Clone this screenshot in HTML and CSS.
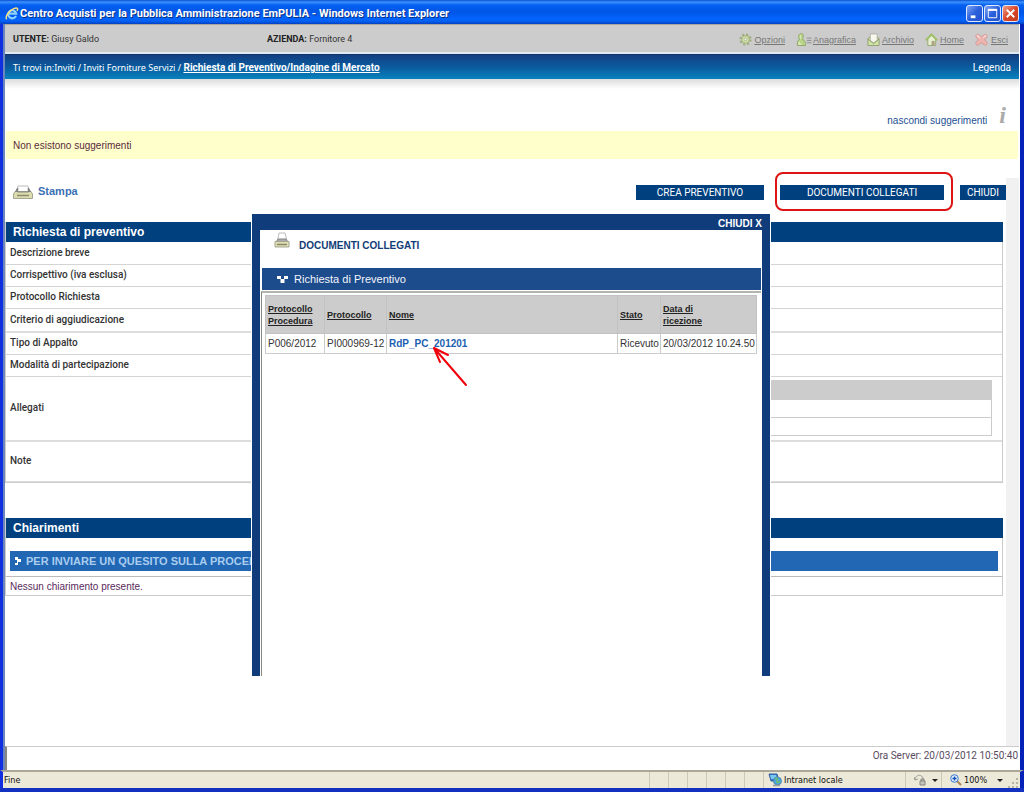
FILE: index.html
```html
<!DOCTYPE html>
<html lang="it">
<head>
<meta charset="utf-8">
<title>Centro Acquisti per la Pubblica Amministrazione EmPULIA</title>
<link rel="stylesheet" href="styles.css">
</head>
<body>
<div class="window">
  <header class="titlebar">
    <svg class="ie" viewBox="0 0 16 16" aria-hidden="true"><path d="M12.5 10.2A4.6 4.6 0 1 1 12.8 7.6H5" fill="none" stroke="#8fd4ff" stroke-width="2.4"/><path d="M2 14C-.5 11 5 3.500 10 1.800 14 .4 15.500 1.500 13.700 4.300" fill="none" stroke="#ffe27a" stroke-width="1.600"/></svg>
    <h1 class="title">Centro Acquisti per la Pubblica Amministrazione EmPULIA - Windows Internet Explorer</h1>
    <div class="controls">
      <button class="control" type="button" aria-label="Riduci a icona"><svg viewBox="0 0 16 16"><path d="M4 11.500h5" stroke="#fff" stroke-width="3"/></svg></button>
      <button class="control" type="button" aria-label="Ingrandisci"><svg viewBox="0 0 16 16"><path d="M3.500 4.500h9v8h-9z" fill="none" stroke="#fff"/><path d="M3 4h10" stroke="#fff" stroke-width="2"/></svg></button>
      <button class="control control-close" type="button" aria-label="Chiudi finestra"><svg viewBox="0 0 16 16"><path d="M4 4l8 8M12 4l-8 8" stroke="#fff" stroke-width="2"/></svg></button>
    </div>
  </header>
  <div class="client">
    <div class="userbar">
      <p class="user"><b>UTENTE:</b> Giusy Galdo</p>
      <p class="company"><b>AZIENDA:</b> Fornitore 4</p>
      <nav class="tools">
        <a href="#"><svg viewBox="0 0 14 14"><circle cx="7" cy="7" r="5.300" fill="none" stroke="#9fae7e" stroke-width="2.600" stroke-dasharray="2.300 1.860"/><circle cx="7" cy="7" r="4" fill="#d3e2aa" stroke="#a3b37c"/><circle cx="7" cy="7" r="1.500" fill="#eee" stroke="#91a06d" stroke-width=".7"/></svg>Opzioni</a>
        <a class="tight" href="#"><svg class="wide" viewBox="0 0 17 14"><path d="M1 13.500C.5 9 1.500 8 3 7 1.300 4 2.300.6 5 .6S7.700 4 6.300 7C9 8 9.700 10 9.500 13.500z" fill="#b9d488" stroke="#8ba565"/><path d="M4.500 2.500c-1 1.500-.5 3 .5 4M3 9.500c-.7 1-.7 1.500-.7 2.500h3" fill="none" stroke="#eef6da"/><path d="M11 5.500h5M11 8h5M11 10.500h5" stroke="#8c8c8c"/></svg>Anagrafica</a>
        <a href="#"><svg viewBox="0 0 14 14"><path d="M1 6l6-4 6 4v7.500H1z" fill="#cfe3a3" stroke="#8f9e70"/><path d="M3.500 1h7.500v7l-4 2.500L3.500 8z" fill="#f7f7ee" stroke="#a5a59d" stroke-width=".8"/><path d="M1 6.500l6 5 6-5" fill="none" stroke="#8f9e70"/></svg>Archivio</a>
        <a href="#"><svg viewBox="0 0 14 14"><path d="M3 6v7.500h8.500V6L7 2.500z" fill="#e6efcf" stroke="#94a673"/><path d="M.8 8L7 1.500 13.200 8" fill="none" stroke="#9fbf68" stroke-width="2"/><path d="M7.500 13V9H10v4" fill="#b9a789" stroke="#8e8e6d" stroke-width=".6"/></svg>Home</a>
        <a class="loose" href="#"><svg viewBox="0 0 14 14"><path d="M3 3.500l8 7.500M11 3.500L3 11" stroke="#cf9c98" stroke-width="5" stroke-linecap="round"/><path d="M3 3.500l8 7.500M11 3.500L3 11" stroke="#f0b4af" stroke-width="3.400" stroke-linecap="round"/><path d="M2.500 2.800L5 5M11.500 2.800L9.500 4.500" stroke="#fbe8e6" stroke-width="1.200" stroke-linecap="round"/></svg>Esci</a>
      </nav>
    </div>
    <nav class="crumbs">
      <p>Ti trovi in:Inviti / Inviti Forniture Servizi / <a href="#">Richiesta di Preventivo/Indagine di Mercato</a></p>
      <a class="legend" href="#">Legenda</a>
    </nav>
    <div class="hint-toggle"><a href="#">nascondi suggerimenti</a><i class="info" aria-hidden="true">i</i></div>
    <p class="hint">Non esistono suggerimenti</p>
    <div class="workspace">
      <main class="page">
        <div class="actions">
          <a class="print" href="#"><svg viewBox="0 0 20 14"><path d="M4 7L5 1h10l1 6z" fill="#fff" stroke="#bbb"/><path d="M2 6.500h16l1.500 2.500v4.500H.5V9z" fill="#dcdcae" stroke="#a5a594"/><path d="M2.500 7L4 3.500h1L4.500 7h11L15 3.500h1L17.500 7" fill="#888" stroke="#777" stroke-width=".8"/><path d="M4 10.500h12" stroke="#8b8b70" stroke-width="1.500"/></svg>Stampa</a>
          <button class="cmd cmd-create" type="button">CREA PREVENTIVO</button>
          <span class="marked"><button class="cmd cmd-docs" type="button">DOCUMENTI COLLEGATI</button></span>
          <button class="cmd cmd-close" type="button">CHIUDI</button>
        </div>
        <section class="panel">
          <h2>Richiesta di preventivo</h2>
          <table class="fields">
            <tr><th>Descrizione breve</th><td></td></tr>
            <tr><th>Corrispettivo (iva esclusa)</th><td></td></tr>
            <tr><th>Protocollo Richiesta</th><td></td></tr>
            <tr class="heavy"><th>Criterio di aggiudicazione</th><td></td></tr>
            <tr><th>Tipo di Appalto</th><td></td></tr>
            <tr><th>Modalità di partecipazione</th><td></td></tr>
            <tr class="heavy tall"><th>Allegati</th><td><div class="files"><div></div><div></div><div></div></div></td></tr>
            <tr class="note"><th>Note</th><td></td></tr>
          </table>
        </section>
        <section class="panel">
          <h2>Chiarimenti</h2>
          <a class="ask" href="#"><svg viewBox="0 0 6 8"><path d="M0 0h3v2h3v3H3v3H0V6h2V3H0z" fill="#fff"/></svg>PER INVIARE UN QUESITO SULLA PROCEDURA</a>
          <p class="empty">Nessun chiarimento presente.</p>
        </section>
      </main>
      <div class="gutter"></div>
      <section class="dialog" role="dialog" aria-labelledby="dialog-title">
        <button class="dismiss" type="button">CHIUDI X</button>
        <div class="sheet">
          <div class="sheet-head"><svg viewBox="0 0 16 16"><path d="M3.500 9l1.500-8h6l2 8z" fill="#fff" stroke="#bbb"/><path d="M2.500 9.500L4 7h8l1.500 2.500z" fill="#aaa" stroke="#888"/><path d="M1 9.500h14v5.500H1z" fill="#dedeb2" stroke="#a5a594"/><path d="M3 12.500h10" stroke="#89896a" stroke-width="1.500"/></svg><h2 id="dialog-title">DOCUMENTI COLLEGATI</h2></div>
          <h3 class="group"><svg viewBox="0 0 11 7"><path d="M0 0h4v3H0zM7 0h4v3H7zM3.500 3h4v4h-4z" fill="#fff"/></svg>Richiesta di Preventivo</h3>
          <div class="list">
            <table class="docs">
              <colgroup><col class="c-proc"><col class="c-prot"><col><col class="c-state"><col class="c-date"></colgroup>
              <thead><tr><th><a href="#">Protocollo Procedura</a></th><th><a href="#">Protocollo</a></th><th><a href="#">Nome</a></th><th><a href="#">Stato</a></th><th><a href="#">Data di<br>ricezione</a></th></tr></thead>
              <tbody><tr><td>P006/2012</td><td>PI000969-12</td><td class="name"><a href="#">RdP_PC_201201</a><svg class="arrow" viewBox="0 0 36 42" aria-hidden="true"><path d="M34 40L2 3M2 3l14 7M2 3l6 14" fill="none" stroke="#f0000a" stroke-width="2" stroke-linecap="round"/></svg></td><td>Ricevuto</td><td>20/03/2012 10.24.50</td></tr></tbody>
            </table>
          </div>
        </div>
      </section>
    </div>
    <p class="clock">Ora Server: 20/03/2012 10:50:40</p>
  </div>
  <footer class="status">
    <span class="state">Fine</span>
    <span class="slot"></span><span class="slot"></span><span class="slot"></span><span class="slot"></span><span class="slot"></span><span class="slot"></span>
    <span class="zone"><svg viewBox="0 0 14 14"><path d="M1 1h8l2 7H3z" fill="#3a7ad0" stroke="#345d9c"/><path d="M2 2h6l1 4H3z" fill="#78c7f0"/><circle cx="9.500" cy="8" r="4" fill="#49a7dc" stroke="#4378a8" stroke-width=".7"/><path d="M7 6c2-2 3 0 2 2s2 2 3 0" fill="none" stroke="#71bc75" stroke-width="1.600"/><path d="M5 12.500h7" stroke="#9d9d9d" stroke-width="1.500"/></svg>Intranet locale</span>
    <button class="lock" type="button" aria-label="Protezione"><svg viewBox="0 0 12 12"><path d="M1 6c0-6 8-6 8-1M1 6L0 3M1 6l3-1" fill="none" stroke="#9b9b93"/><path d="M6 7h5v4H6zM7 7V5h3v2" fill="#c6c6bd" stroke="#85857e"/></svg><i class="drop"></i></button>
    <button class="zoom" type="button"><svg viewBox="0 0 12 12"><path d="M7 7l4 4" stroke="#ac8454" stroke-width="2"/><circle cx="4.500" cy="4.500" r="3.800" fill="#dceeff" stroke="#3977cf"/><path d="M2.500 4.500h4M4.500 2.500v4" stroke="#174dad" stroke-width="1.300"/></svg>100%<i class="drop"></i></button>
    <svg class="grip" viewBox="0 0 10 10" aria-hidden="true"><path d="M8 0h2v2H8zM4 4h2v2H4zM8 4h2v2H8zM0 8h2v2H0zM4 8h2v2H4zM8 8h2v2H8z" fill="#b8b4a2"/></svg>
  </footer>
</div>
</body>
</html>
```
FILE: styles.css
```css
* { box-sizing: border-box; }
body, h1, h2, h3, p { margin: 0; }
body {
  font: 10px/12px "Liberation Sans", Arial, sans-serif;
  color: #333;
  background: #fff;
}
button { margin: 0; padding: 0; border: 0; background: none; font: inherit; color: inherit; }
a { color: inherit; }
svg { flex: none; }
table { border-collapse: collapse; width: 100%; }

.window { display: flex; flex-direction: column; min-height: 100vh; border-bottom: 4px solid #1231c0; }

.titlebar {
  display: flex; align-items: center; height: 24px; padding: 3px 5px 0;
  background: linear-gradient(#0a4fd0, #3d93ff 2px, #0560f0 5px, #0055e5 12px, #0263fb 18px, #0461f5 21px, #0440c0);
}
.ie { width: 14px; height: 14px; margin-right: 1px; }
.title { flex: 1; font: bold 11px/14px Roboto, sans-serif; color: #fff; text-shadow: 1px 1px 0 #0b3187; }
.controls { display: flex; gap: 1px; }
.control {
  width: 17px; height: 17px; border: 1px solid #dfe8fb; border-radius: 3px;
  background: linear-gradient(135deg, #7fa6f5, #2a5fdc 50%, #2453cb);
}
.control svg { display: block; width: 15px; height: 15px; }
.control-close { background: linear-gradient(135deg, #f0a088, #d9472a 50%, #c33a17); }

.client {
  flex: 1; display: flex; flex-direction: column; padding: 0 1px 0 2px;
  border: solid; border-width: 0 4px 0 3px; border-color: #1235d4 #0522b8 #1235d4 #0f2fe0;
  background: linear-gradient(to right, #6b86bd 2px, #fff 2px);
}
.userbar {
  display: flex; align-items: center; height: 30px; padding: 0 11px 0 8px;
  border-top: 1px solid #a9a59a; border-bottom: 2px solid #dceaf4;
  background: #ccc; font: 9px/12px Roboto, sans-serif;
}
.userbar b { color: #222; }
.user { width: 254px; }
.company { flex: 1; }
.tools { display: flex; gap: 11px; padding-top: 2px; font: 9px/12px "Liberation Sans", sans-serif; color: #777; }
.tools a { display: flex; align-items: center; gap: 2px; }
.tools a.tight { gap: 0; }
.tools a.loose { gap: 3px; }
.tools svg { width: 13px; height: 13px; }
.tools svg.wide { width: 17px; }

.crumbs {
  display: flex; justify-content: space-between; align-items: center; height: 25px; padding: 2px 8px 0;
  background: linear-gradient(#123f82, #0b5b9f 50%, #0882bd); color: #fff; font: 10px/12px Roboto, sans-serif;
  border-top: 1px solid #15346c;
}
.crumbs p { font: 9px/12px "Noto Sans", sans-serif; }
.crumbs p a { font: bold 10px/12px Roboto, sans-serif; }
.legend { text-decoration: none; }

.hint-toggle {
  display: flex; justify-content: flex-end; align-items: flex-end; gap: 12px; height: 52px; padding: 0 13px 4px;
  background: linear-gradient(#dcdcdc, #fff 10px); color: #1d4f91;
}
.hint-toggle a { text-decoration: none; }
.info { font: italic bold 24px/24px "Liberation Serif", serif; color: #aaa; }
.hint { height: 28px; margin: 0 1px; padding: 9px 7px 0; background: #ffc; color: #5a2a3c; }

.workspace { position: relative; flex: 1; display: flex; margin-top: 19px; }
.page { flex: 1; }
.gutter { width: 13px; background: #f1f1f1; }

.actions { display: flex; gap: 16px; height: 44px; padding-top: 7px; }
.print {
  display: flex; gap: 5px; height: 14px; margin: 0 auto 0 8px;
  font-weight: bold; font-size: 11px; color: #3a6fb4; text-decoration: none;
}
.print svg { width: 20px; height: 14px; }
.cmd { height: 15px; background: #00407f; color: #fff; font: 10px/15px Roboto, sans-serif; }
.cmd-create { width: 128px; }
.cmd-docs { width: 164px; }
.cmd-close { width: 46px; }
.marked { position: relative; height: 15px; display: flex; }
.marked::after {
  content: ""; position: absolute; inset: -13px -9px -11px -5px;
  border: 2px solid #dc1414; border-radius: 8px; pointer-events: none;
}

.panel { margin: 0 3px 35px 0; border: solid #ccc; border-width: 0 1px 1px; }
.panel h2 { height: 20px; margin: 0 -1px 0 0; padding-left: 7px; background: #00407f; color: #fff; font-size: 12px; line-height: 20px; }
.fields th, .fields td { height: 22px; padding: 0; border-bottom: 1px solid #d4d4d4; }
.fields th { width: 300px; padding-left: 4px; text-align: left; font: 500 10px/12px Roboto, sans-serif; }
.fields .heavy > * { height: 24px; border-bottom: 2px solid #ddd; }
.fields .tall > * { height: 65px; }
.fields .note > * { height: 40px; border-bottom: 1px solid #ddd; }
.files { margin-right: 10px; border: solid #ccc; border-width: 0 1px; }
.files div { height: 18px; border-bottom: 1px solid #ccc; }
.files div:first-child { height: 20px; background: #ccc; }

.ask {
  display: flex; align-items: center; gap: 5px; height: 20px; margin: 13px 4px 5px; padding-left: 5px;
  background: #2167b3; color: #a9cdf0; font: bold 11px/14px "Liberation Sans", sans-serif; text-decoration: none; white-space: nowrap;
}
.ask svg { width: 6px; height: 8px; }
.empty { padding: 4px 4px 2px; border-top: 1px solid #bbb; color: #5a2a5c; }

.dialog {
  position: absolute; top: 36px; left: 0; right: 2px; width: 518px; height: 462px; margin: 0 auto;
  display: flex; flex-direction: column; padding: 0 8px; background: #103c7c; box-shadow: 0 0 0 1px #fff;
}
.dismiss { align-self: flex-end; height: 16px; padding-top: 4px; color: #fff; font-weight: bold; line-height: 12px; white-space: nowrap; }
.sheet { flex: 1; display: flex; flex-direction: column; padding: 0 1px; background: #fff; }
.sheet-head { display: flex; gap: 9px; height: 38px; padding: 2px 13px; }
.sheet-head svg { width: 16px; height: 16px; }
.sheet-head h2 { padding-top: 8px; font-size: 10px; line-height: 12px; color: #123c77; }
.group {
  display: flex; align-items: center; gap: 6px; height: 22px; padding-left: 15px; margin-left: 1px;
  background: #1d4c8d; color: #f3f6fb; font-weight: normal; font-size: 11px; line-height: 14px;
}
.group svg { width: 11px; height: 7px; }
.list { flex: 1; margin-top: 1px; padding: 2px 4px 0 3px; border-top: 2px solid #b5b5b0; border-left: 1px solid #85897f; }
.docs { table-layout: fixed; }
.docs th, .docs td { padding: 0 2px; border: 1px solid #ccc; text-align: left; white-space: nowrap; }
.docs th { height: 38px; background: #ccc; border-color: #c2c2c2; font: bold 9px/12px "Liberation Sans", sans-serif; white-space: normal; color: #222; }
.docs td { height: 20px; }
.c-proc { width: 59px; }
.c-prot { width: 62px; }
.c-state { width: 43px; }
.c-date { width: 96px; }
.docs .name { position: relative; font-weight: bold; color: #1c5fb0; }
.name a { text-decoration: none; }
.arrow { position: absolute; left: 45px; top: 11px; width: 36px; height: 42px; }

.clock {
  height: 24px; padding: 3px 1px 0; border-top: 1px solid #ccc; border-left: 2px solid #8a8680;
  text-align: right; color: #5a4a60; font-family: Roboto, sans-serif;
}

.status {
  display: flex; height: 18px; padding: 0 2px 0 1px;
  border: solid; border-width: 2px 4px 0 3px; border-color: #aca899 #0522b8 #1235d4 #0f2fe0;
  background: #ece9d8; color: #111; font: 9px/16px "DejaVu Sans Condensed", "DejaVu Sans", sans-serif;
}
.state { flex: 1; }
.slot { width: 19px; border-left: 1px solid #cdc9b6; }
.zone { display: flex; align-items: center; gap: 2px; width: 142px; padding-left: 4px; border-left: 1px solid #cdc9b6; }
.zone svg { width: 14px; height: 14px; }
.lock, .zoom { display: flex; align-items: center; gap: 6px; padding-left: 8px; border-left: 1px solid #cdc9b6; }
.lock { width: 36px; }
.zoom { width: 67px; gap: 2px; }
.lock svg, .zoom svg { width: 12px; height: 12px; }
.drop { border: 3px solid transparent; border-top-color: #222; border-bottom: 0; }
.zoom .drop { margin-left: 8px; }
.grip { width: 10px; height: 10px; align-self: flex-end; }
```
